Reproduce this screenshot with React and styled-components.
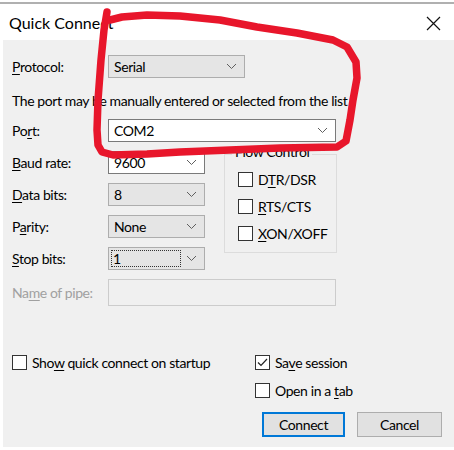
import styled, { createGlobalStyle } from "styled-components";

const GlobalStyle = createGlobalStyle`
  html, body {
    margin: 0;
    padding: 0;
    background: #ffffff;
  }
  body {
    font-family: Lato, "Noto Sans", "Liberation Sans", sans-serif;
    font-size: 14px;
    color: #000;
  }
`;

// 下拉箭头
const Chevron = () => (
  <svg width="11" height="7" viewBox="0 0 11 7">
    <path d="M1 1 L5.5 5.5 L10 1" fill="none" stroke="#5f5f5f" strokeWidth="1" />
  </svg>
);

const CloseIcon = () => (
  <svg width="15" height="15" viewBox="0 0 15 15">
    <path d="M1 1 L14 14 M14 1 L1 14" stroke="#111" strokeWidth="1.2" />
  </svg>
);

const CheckMark = () => (
  <svg width="13" height="13" viewBox="0 0 13 13">
    <path d="M2 6.5 L5 9.5 L11 3" fill="none" stroke="#222" strokeWidth="1.2" />
  </svg>
);

const Dropdown = ({ value, width, height = 23, variant = "list", focus }) => (
  <Select $variant={variant} $width={width} $height={height}>
    {focus ? <FocusBox>{value}</FocusBox> : <SelectValue>{value}</SelectValue>}
    {variant !== "disabled" && (
      <Arrow>
        <Chevron />
      </Arrow>
    )}
  </Select>
);

const Check = ({ checked, children }) => (
  <CheckRow>
    <Box>{checked && <CheckMark />}</Box>
    <span>{children}</span>
  </CheckRow>
);

// 빨간 펜 표시
const scribble = [
  [107, 12], [104, 30], [101, 60], [98, 100], [97, 130], [98, 145], [102, 152],
  [113, 155], [147, 154], [180, 152], [230, 150], [280, 148], [337, 147],
  [346, 141], [350, 120], [353, 100], [357, 78], [356, 62], [347, 47],
  [333, 40], [297, 33], [257, 27], [220, 20], [180, 16], [147, 15], [122, 17],
  [110, 20],
];

const App = () => {
  return (
    <>
      <GlobalStyle />
      <Window>
        <TopRule />
        <TitleBar>
          <Title>Quick Connect</Title>
          <CloseBtn>
            <CloseIcon />
          </CloseBtn>
        </TitleBar>
        <Body>
          <FieldRow>
            <Label>
              <U>P</U>rotocol:
            </Label>
            <Dropdown value="Serial" width={137} />
          </FieldRow>
          <Hint>The port may be manually entered or selected from the list</Hint>
          <FieldRow $top={9}>
            <Label>
              Po<U>r</U>t:
            </Label>
            <Dropdown value="COM2" width={228} variant="combo" />
          </FieldRow>
          <Middle>
            <LeftCol>
              <FieldRow>
                <Label>
                  <U>B</U>aud rate:
                </Label>
                <Dropdown value="9600" width={97} variant="combo" />
              </FieldRow>
              <FieldRow>
                <Label>
                  <U>D</U>ata bits:
                </Label>
                <Dropdown value="8" width={97} />
              </FieldRow>
              <FieldRow>
                <Label>
                  P<U>a</U>rity:
                </Label>
                <Dropdown value="None" width={97} />
              </FieldRow>
              <FieldRow>
                <Label>
                  <U>S</U>top bits:
                </Label>
                <Dropdown value="1" width={97} focus />
              </FieldRow>
            </LeftCol>
            <Group>
              <Legend>Flow Control</Legend>
              <Check>
                D<U>T</U>R/DSR
              </Check>
              <Check>
                <U>R</U>TS/CTS
              </Check>
              <Check>
                <U>X</U>ON/XOFF
              </Check>
            </Group>
          </Middle>
          <FieldRow $top={9}>
            <Label disabled>
              Na<U>m</U>e of pipe:
            </Label>
            <Dropdown value="" width={228} height={27} variant="disabled" />
          </FieldRow>
          <Footer>
            <Check>
              Sho<U>w</U> quick connect on startup
            </Check>
            <RightCol>
              <Check checked>
                Sa<U>v</U>e session
              </Check>
              <Check>
                Open in a <U>t</U>ab
              </Check>
            </RightCol>
          </Footer>
          <Buttons>
            <Button $primary>Connect</Button>
            <Button>Cancel</Button>
          </Buttons>
        </Body>
        <Overlay width="454" height="450" viewBox="0 0 454 450">
          <polyline
            points={scribble.map((p) => p.join(",")).join(" ")}
            fill="none"
            stroke="#e8162b"
            strokeWidth="7.5"
            strokeLinecap="round"
            strokeLinejoin="round"
          />
        </Overlay>
      </Window>
    </>
  );
};

// styled-components
const Window = styled.div`
  position: relative;
  width: 454px;
  height: 450px;
  background: #fff;
  overflow: hidden;
`;
const TopRule = styled.div`
  margin-top: 2px;
  height: 2px;
  background: #b0b0b0;
`;
const TitleBar = styled.div`
  height: 36px;
  display: flex;
  align-items: center;
  justify-content: space-between;
  padding: 0 13px 0 9px;
`;
const Title = styled.div`
  font-size: 16px;
  color: #000;
`;
const CloseBtn = styled.div`
  display: flex;
  margin-top: 2px;
`;
const Body = styled.div`
  margin-left: 3px;
  height: 407px;
  background: #f0f0f0;
  padding: 15px 0 0 9px;
  box-sizing: border-box;
  letter-spacing: -0.4px;
`;
const FieldRow = styled.div`
  display: grid;
  grid-template-columns: 96px auto;
  align-items: center;
  margin-top: ${({ $top }) => $top || 0}px;
`;
const Label = styled.div`
  color: ${({ disabled }) => (disabled ? "#a0a0a0" : "#000")};
  white-space: nowrap;
`;
const U = styled.span`
  text-decoration: underline;
  text-underline-offset: 2px;
  text-decoration-thickness: 1px;
`;
const Hint = styled.div`
  margin-top: 14px;
  line-height: 18px;
  white-space: nowrap;
`;
const Select = styled.div`
  width: ${({ $width }) => $width}px;
  height: ${({ $height }) => $height}px;
  box-sizing: border-box;
  display: flex;
  align-items: center;
  justify-content: space-between;
  padding: 0 4px 0 2px;
  background: ${({ $variant }) =>
    $variant === "combo" ? "#fff" : $variant === "disabled" ? "#f0f0f0" : "#e5e5e5"};
  border: 1px solid
    ${({ $variant }) =>
      $variant === "combo" ? "#7a7a7a" : $variant === "disabled" ? "#cccccc" : "#adadad"};
`;
const SelectValue = styled.span`
  padding-left: 3px;
`;
const FocusBox = styled.span`
  flex: 0 0 70px;
  height: 17px;
  box-sizing: border-box;
  border: 1px dotted #333;
  line-height: 15px;
  padding-left: 1px;
`;
const Arrow = styled.span`
  display: flex;
  padding-right: 3px;
`;
const Middle = styled.div`
  display: flex;
  margin-top: 9px;
`;
const LeftCol = styled.div`
  width: 193px;
  display: flex;
  flex-direction: column;
  gap: 9px;
`;
const Group = styled.div`
  position: relative;
  margin: 3px 0 0 19px;
  width: 113px;
  height: 99px;
  box-sizing: border-box;
  border: 1px solid #dcdcdc;
  padding: 16px 0 0 13px;
  display: flex;
  flex-direction: column;
  gap: 10px;
`;
const Legend = styled.div`
  position: absolute;
  top: -12px;
  left: 7px;
  padding: 0 3px;
  background: #f0f0f0;
`;
const CheckRow = styled.div`
  display: flex;
  align-items: center;
  gap: 5px;
  height: 17px;
  white-space: nowrap;
`;
const Box = styled.div`
  width: 15px;
  height: 15px;
  box-sizing: border-box;
  border: 1px solid #333;
  background: #fff;
  display: flex;
  align-items: center;
  justify-content: center;
`;
const Footer = styled.div`
  display: grid;
  grid-template-columns: 243px auto;
  margin-top: 48px;
`;
const RightCol = styled.div`
  display: flex;
  flex-direction: column;
  gap: 11px;
`;
const Buttons = styled.div`
  display: flex;
  justify-content: flex-end;
  gap: 12px;
  margin: 13px 12px 0 0;
`;
const Button = styled.div`
  width: ${({ $primary }) => ($primary ? 83 : 85)}px;
  height: 25px;
  box-sizing: border-box;
  display: flex;
  align-items: center;
  justify-content: center;
  background: #e1e1e1;
  border: 1px solid ${({ $primary }) => ($primary ? "#0078d7" : "#adadad")};
  box-shadow: ${({ $primary }) => ($primary ? "inset 0 0 0 1px #0078d7" : "none")};
`;
const Overlay = styled.svg`
  position: absolute;
  left: 0;
  top: 0;
  pointer-events: none;
`;

export default App;
